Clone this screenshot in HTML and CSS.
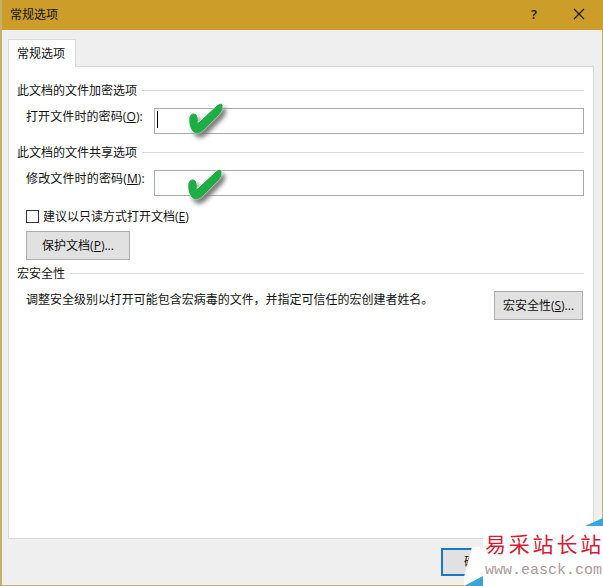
FILE: index.html
```html
<!DOCTYPE html>
<html lang="zh-CN">
<head>
<meta charset="utf-8">
<title>常规选项</title>
<link rel="stylesheet" href="styles.css">
</head>
<body>
<div class="dialog">
  <header class="titlebar">
    <span class="title">常规选项</span>
    <span class="help">?</span>
    <svg class="close" width="12" height="12" viewBox="0 0 12 12"><path d="M1 1L11 11M11 1L1 11"/></svg>
  </header>
  <div class="tabs"><div class="tab">常规选项</div></div>
  <main class="panel">
    <div class="group"><span>此文档的文件加密选项</span></div>
    <div class="field">
      <label>打开文件时的密码(<u>O</u>):</label>
      <div class="input"><i class="caret"></i>
        <svg class="check" width="50" height="46" viewBox="0 0 50 46"><path d="M7 14Q9 9 13 12Q15 15 14 20Q16 21 18 18L34 3Q38 0 39 2Q40 7 36 11L20 27Q14 32 10 28Q6 23 7 14Z"/></svg>
      </div>
    </div>
    <div class="group second"><span>此文档的文件共享选项</span></div>
    <div class="field">
      <label class="wide">修改文件时的密码(<u>M</u>):</label>
      <div class="input">
        <svg class="check lower" width="50" height="46" viewBox="0 0 50 46"><path d="M7 14Q9 9 13 12Q15 15 14 20Q16 21 18 18L34 3Q38 0 39 2Q40 7 36 11L20 27Q14 32 10 28Q6 23 7 14Z"/></svg>
      </div>
    </div>
    <div class="option"><i class="box"></i><span>建议以只读方式打开文档(<u>E</u>)</span></div>
    <div class="button protect">保护文档(<u>P</u>)...</div>
    <div class="group third"><span>宏安全性</span></div>
    <div class="macro">
      <p>调整安全级别以打开可能包含宏病毒的文件，并指定可信任的宏创建者姓名。</p>
      <div class="button security">宏安全性(<u>S</u>)...</div>
    </div>
  </main>
  <footer class="footer"><div class="ok">确</div></footer>
</div>
<div class="watermark">
  <svg class="corners" width="139" height="69" viewBox="0 0 139 69">
    <path class="white" d="M19 9H139V69H0V60L8 30H19Z"/>
    <path class="blue" d="M121 9L139 1V9ZM0 69L19 59V69Z"/>
  </svg>
  <div class="brand">易采站长站</div>
  <div class="url">www.easck.com</div>
</div>
</body>
</html>
```
FILE: styles.css
```css
* { box-sizing: border-box; }
body {
  margin: 0;
  width: 603px;
  height: 586px;
  overflow: hidden;
  position: relative;
  font: 12px/18px "Open Sans", "Noto Sans CJK SC", sans-serif;
  color: #111;
}
.dialog {
  height: 586px;
  display: flex;
  flex-direction: column;
  background: #efefef;
  border: solid #c5b16c;
  border-width: 0 1px 1px 2px;
}
.titlebar {
  height: 30px;
  flex: none;
  margin: 0 -1px 0 0;
  padding: 0 18px 2px 8px;
  display: flex;
  align-items: center;
  background: #cc9e29;
}
.title { flex: 1; padding-top: 1px; }
.help { font-size: 13px; font-weight: 600; margin-right: 36px; }
.close { fill: none; stroke: #1c1608; stroke-width: 1.2; }
.tabs { height: 37px; flex: none; padding: 9px 0 0 6px; }
.tab {
  position: relative;
  z-index: 1;
  width: 68px;
  height: 28px;
  padding: 5px 0 0 8px;
  background: #fff;
  border: 1px solid #d9d9d9;
  border-bottom: 0;
}
.panel {
  height: 473px;
  flex: none;
  margin: -1px 8px 0 6px;
  padding: 14px 9px 0 8px;
  background: #fff;
  border: 1px solid #d9d9d9;
}
.group {
  height: 18px;
  display: flex;
  align-items: center;
  gap: 5px;
  white-space: nowrap;
}
.group span { padding-top: 2px; }
.group::after { content: ""; flex: 1; height: 1px; background: #d9d9d9; }
.field { height: 26px; margin-top: 9px; display: flex; }
.field label { width: 137px; padding-left: 9px; white-space: nowrap; letter-spacing: 0.1px; }
.field .wide { letter-spacing: 0.15px; }
.input { position: relative; flex: 1; border: 1px solid #aaa; height: 26px; }
.caret { display: block; width: 1px; height: 17px; margin: 2px 0 0 2px; background: #000; }
.check { position: absolute; left: 28px; top: -6px; overflow: visible; filter: drop-shadow(3px 4px 2px #777); }
.check.lower { left: 27px; top: -2px; }
.check path { fill: #1cae43; stroke: #1cae43; stroke-width: 1; filter: drop-shadow(0 0 1px #fff); }
.second { margin-top: 9px; }
.option { display: flex; align-items: center; height: 18px; margin: 11px 0 0 9px; gap: 4px; }
.option span { padding-top: 2px; }
.box { width: 13px; height: 13px; border: 1px solid #333; }
.button {
  height: 29px;
  display: flex;
  align-items: center;
  justify-content: center;
  background: #e1e1e1;
  border: 1px solid #adadad;
  white-space: nowrap;
}
.protect { width: 104px; margin: 6px 0 0 9px; }
.third { margin-top: 4px; }
.macro { display: flex; justify-content: space-between; margin: 9px 1px 0 9px; }
.macro p { margin: 0; white-space: nowrap; letter-spacing: -0.02px; }
.security { width: 89px; }
.footer { display: flex; justify-content: flex-end; padding: 9px 71px 0 0; }
.ok {
  width: 90px;
  height: 28px;
  padding: 3px 0 0 21px;
  background: #e1e1e1;
  border: 2px solid #1979c0;
}
.watermark { position: absolute; left: 464px; top: 517px; width: 139px; height: 69px; overflow: hidden; padding: 12px 0 0 21px; }
.corners { position: absolute; left: 0; top: 0; }
.white { fill: #fff; }
.blue { fill: #3aa5dc; }
.brand { position: relative; font: 21px/28px "Noto Sans CJK SC", sans-serif; letter-spacing: 2.8px; color: #d51b35; white-space: nowrap; }
.url { position: relative; font: 15px/28px "Liberation Mono", monospace; color: #aa9b9e; }
```
